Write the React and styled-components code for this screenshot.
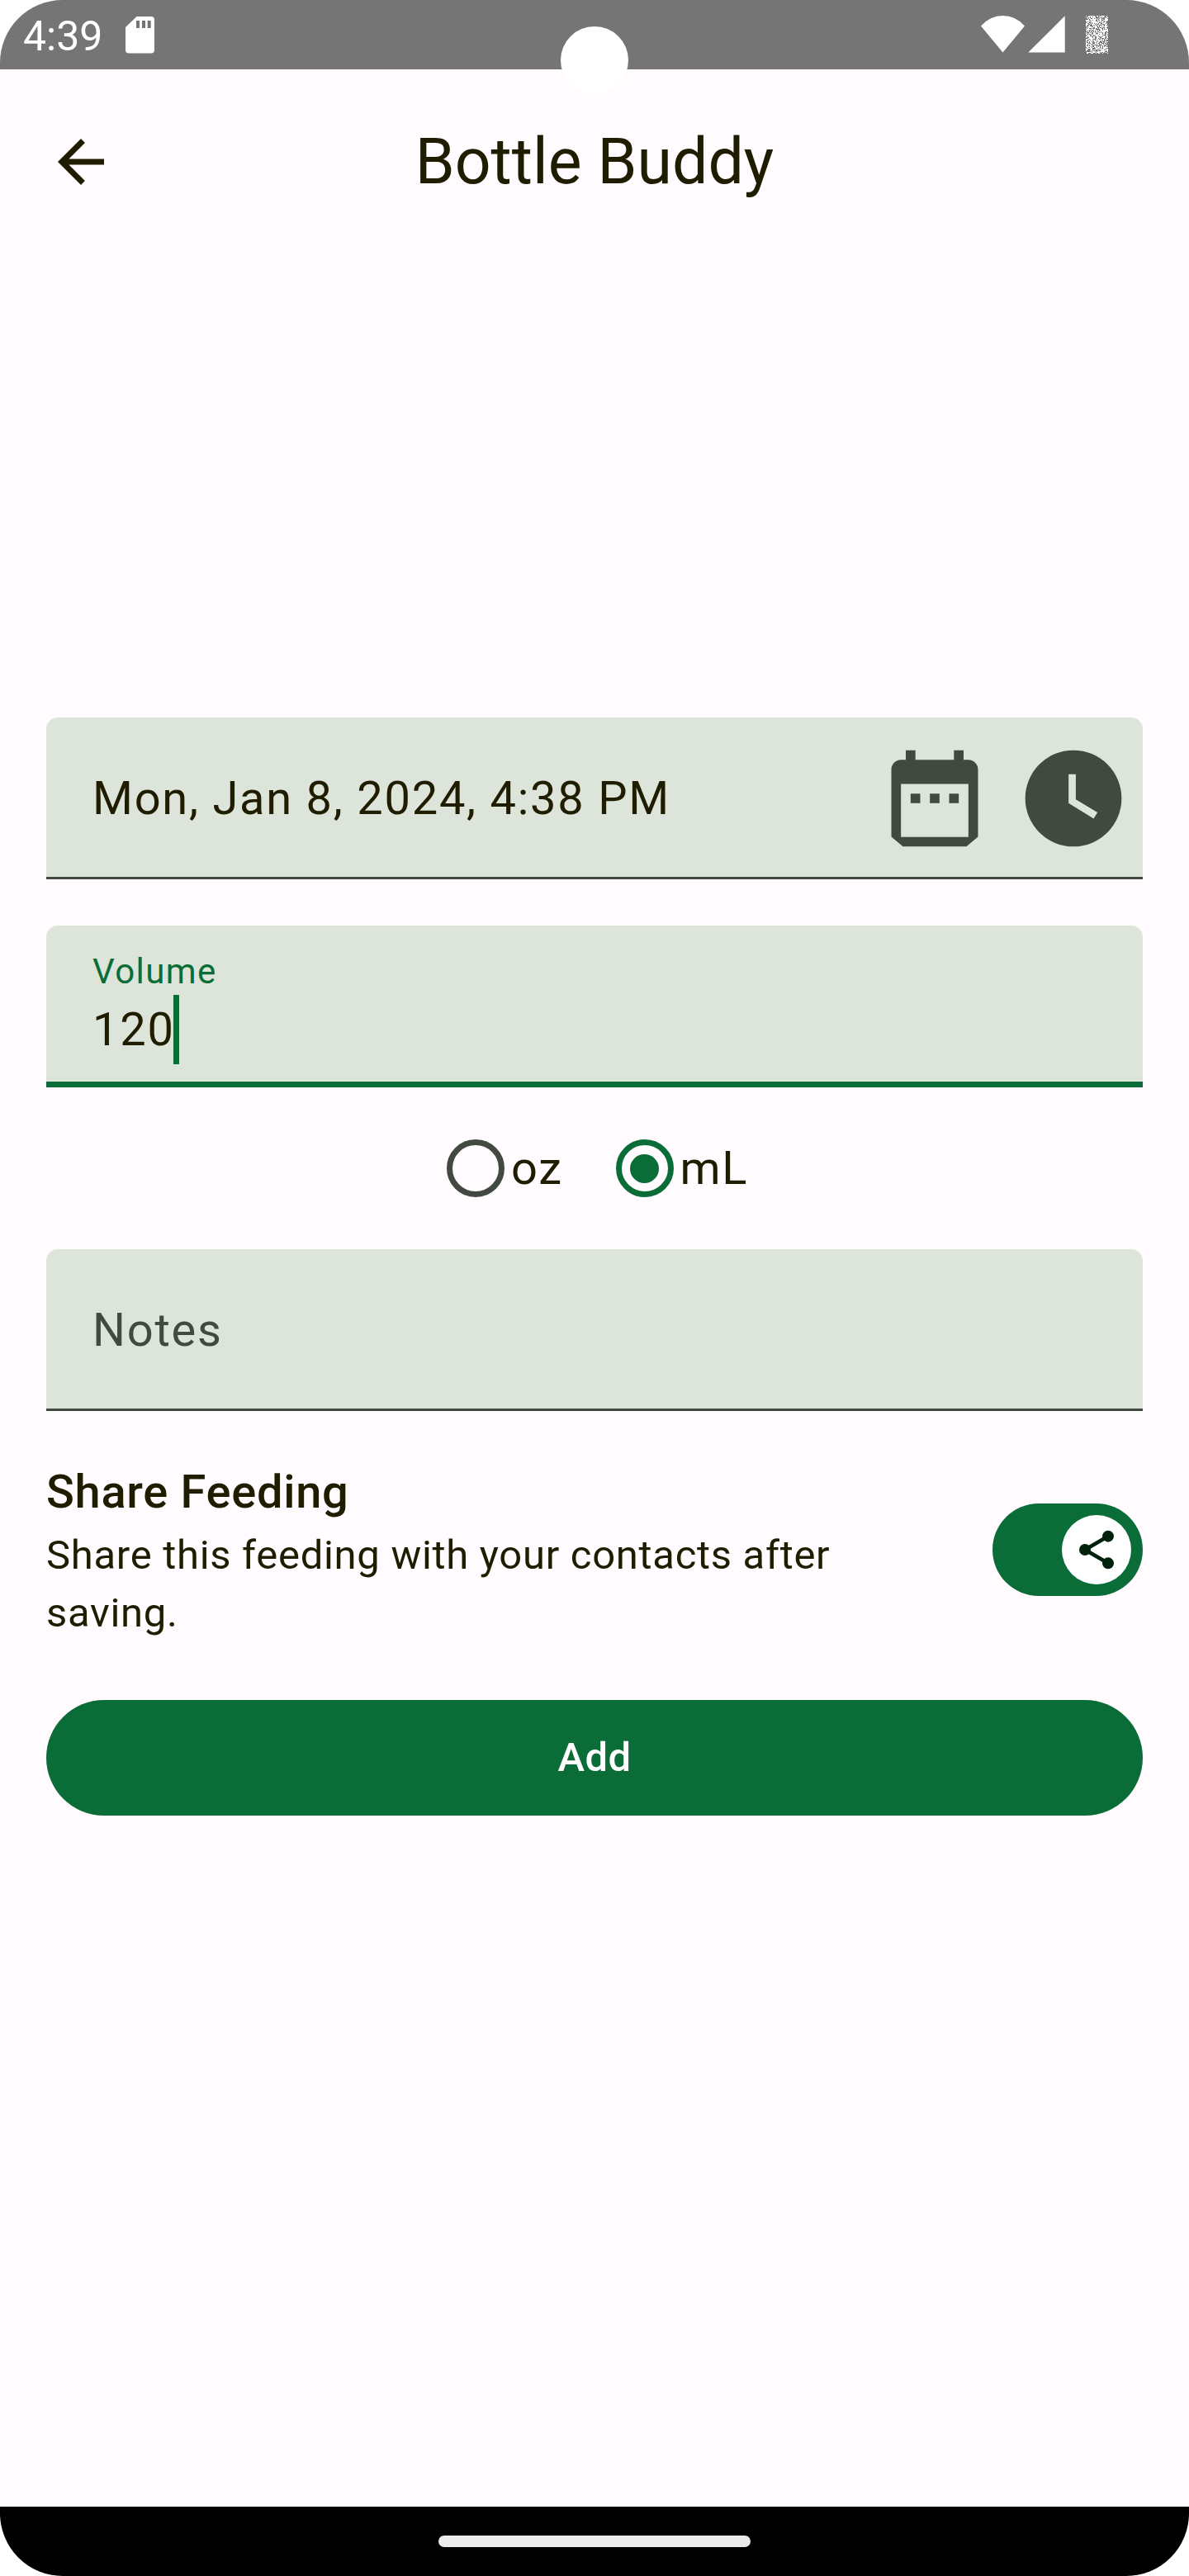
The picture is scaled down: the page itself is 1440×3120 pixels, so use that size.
import React from "react";
import styled, { createGlobalStyle } from "styled-components";

const color = {
  background: "#fffbff",
  field: "#dde5db",
  primary: "#0a6d37",
  ink: "#1f1c00",
  muted: "#414941",
  status: "#757575",
  onThumb: "#00210c",
};

const GlobalStyle = createGlobalStyle`
  * { box-sizing: border-box; }
  html, body { margin: 0; background: #ffffff; }
  body { font-family: Roboto, "Liberation Sans", sans-serif; }
`;

const Screen = styled.div`
  position: relative;
  width: 1440px;
  height: 3120px;
  display: flex;
  flex-direction: column;
  overflow: hidden;
  border-radius: 76px;
  background: ${color.background};
  color: ${color.ink};
`;

const StatusBar = styled.header`
  flex: none;
  height: 84px;
  padding: 0 98px 0 28px;
  display: flex;
  justify-content: space-between;
  background: ${color.status};
  color: #ffffff;
`;

const StatusGroup = styled.div`
  display: flex;
  align-items: flex-start;
`;

const Clock = styled.span`
  width: 124px;
  font-size: 50px;
  line-height: 88px;
`;

const StatusIcon = styled.svg`
  display: block;
  flex: none;
  margin: ${(p) => p.$margin || "0"};
`;

const Camera = styled.div`
  position: absolute;
  left: 679px;
  top: 32px;
  width: 82px;
  height: 82px;
  border-radius: 50%;
  background: #ffffff;
`;

const AppBar = styled.div`
  flex: none;
  height: 224px;
  padding: 0 56px;
  display: grid;
  grid-template-columns: 84px 1fr 84px;
  align-items: center;
`;

const PlainButton = styled.button`
  display: block;
  flex: none;
  padding: 0;
  border: 0;
  background: none;
  color: inherit;
  svg { display: block; fill: currentColor; }
`;

const Title = styled.h1`
  margin: 0;
  text-align: center;
  font-size: 77px;
  font-weight: 400;
  line-height: 98px;
`;

const Form = styled.main`
  flex: 1;
  display: flex;
  flex-direction: column;
  padding: 561px 56px 0;
`;

const Field = styled.div`
  height: 196px;
  padding: 0 14px 0 56px;
  display: flex;
  align-items: center;
  gap: 28px;
  margin-bottom: ${(p) => p.$gap || 0}px;
  border-radius: 14px 14px 0 0;
  background: linear-gradient(
    to top,
    ${(p) => (p.$focused ? color.primary : color.muted)} ${(p) => (p.$focused ? "7px" : "3.5px")},
    ${color.field} ${(p) => (p.$focused ? "7px" : "3.5px")}
  );
  color: ${color.muted};
`;

const FieldText = styled.span`
  flex: ${(p) => (p.$fit ? "none" : 1)};
  color: ${(p) => (p.$placeholder ? color.muted : color.ink)};
  font-size: 56px;
  line-height: 84px;
  letter-spacing: 1.75px;
`;

const FieldStack = styled.div`
  display: flex;
  flex-direction: column;
`;

const FieldLabel = styled.label`
  color: ${color.primary};
  font-size: 42px;
  line-height: 56px;
  letter-spacing: 1.4px;
`;

const ValueLine = styled.div`
  display: flex;
  height: 84px;
`;

const Caret = styled.i`
  width: 7px;
  height: 84px;
  margin-left: -1.5px;
  background: ${color.primary};
`;

const RadioRow = styled.div`
  height: 196px;
  display: flex;
  align-items: center;
  justify-content: center;
  gap: 64px;
  padding-left: 7.5px;
`;

const RadioOption = styled.label`
  display: flex;
  align-items: center;
  gap: 7.75px;
  font-size: 56px;
  line-height: 84px;
  letter-spacing: 1.75px;
`;

const RadioMark = styled.span`
  width: 70px;
  height: 70px;
  display: grid;
  place-items: center;
  border: 7px solid ${(p) => (p.$checked ? color.primary : color.muted)};
  border-radius: 50%;
  &::after {
    content: "";
    width: 35px;
    height: 35px;
    border-radius: 50%;
    background: ${(p) => (p.$checked ? color.primary : "transparent")};
  }
`;

const ShareRow = styled.section`
  display: flex;
  align-items: center;
  justify-content: space-between;
  margin-bottom: 70px;
`;

const ShareCopy = styled.div`
  width: 1090px;
`;

const ShareTitle = styled.h2`
  margin: 0;
  font-size: 56px;
  font-weight: 500;
  line-height: 84px;
  letter-spacing: 0.7px;
`;

const ShareText = styled.p`
  margin: 0;
  font-size: 49px;
  line-height: 70px;
  letter-spacing: 0.7px;
`;

const Switch = styled.div`
  width: 182px;
  height: 112px;
  padding: 14px;
  display: flex;
  justify-content: flex-end;
  border-radius: 56px;
  background: ${color.primary};
`;

const Thumb = styled.div`
  width: 84px;
  height: 84px;
  display: grid;
  place-items: center;
  border-radius: 50%;
  background: #ffffff;
`;

const AddButton = styled.button`
  height: 140px;
  padding: 0;
  border: 0;
  border-radius: 70px;
  background: ${color.primary};
  color: #ffffff;
  font: 500 49px/70px Roboto, "Liberation Sans", sans-serif;
  letter-spacing: 0.35px;
`;

const NavBar = styled.footer`
  flex: none;
  height: 84px;
  display: grid;
  place-items: center;
  background: #000000;
`;

const NavPill = styled.div`
  width: 378px;
  height: 14px;
  border-radius: 7px;
  background: #ebebeb;
`;

// Speckled battery fill: one-pixel runs from a fixed-seed generator.
const batterySpeckle = (() => {
  let seed = 1234567;
  let d = "";
  for (let y = 0; y < 46; y += 1) {
    for (let x = 0; x < 27; x += 1) {
      seed = (Math.imul(seed, 1664525) + 1013904223) >>> 0;
      if (seed / 4294967296 < 0.4) d += `M${x} ${y}h1v1h-1z`;
    }
  }
  return d;
})();

export default function App() {
  return (
    <>
      <GlobalStyle />
      <Screen>
        <StatusBar>
          <StatusGroup>
            <Clock>4:39</Clock>
            <StatusIcon $margin="20px 0 0" width="35" height="45" viewBox="0 0 35 45" fill="#fff">
              <path
                fillRule="evenodd"
                d="M13.5 0H31q4 0 4 4v36.500q0 4-4 4H4q-4 0-4-4V13zM13 5v9h4V5zm7 0v9h4V5zm6.700 0v9h4V5z"
              />
            </StatusIcon>
          </StatusGroup>
          <StatusGroup>
            <StatusIcon $margin="19px 4px 0 0" width="53" height="45" viewBox="0 0 53 45" fill="#fff">
              <path d="M0 12.500Q11 0 26.500 0T53 12.500L26.500 44.500z" />
            </StatusIcon>
            <StatusIcon $margin="19px 25px 0 0" width="45" height="45" viewBox="0 0 45 45" fill="#fff">
              <path d="M0.300 44.600L44.700 0.300V44.600z" />
            </StatusIcon>
            <StatusIcon $margin="19px 0 0" width="27" height="46" viewBox="0 0 27 46" shapeRendering="crispEdges">
              <path fill="#fff" d="M0 0h27v46H0z" />
              <path fill="#757575" d={batterySpeckle} />
            </StatusIcon>
          </StatusGroup>
        </StatusBar>

        <AppBar>
          <PlainButton aria-label="Back">
            <svg width="84" height="84" viewBox="0 0 24 24">
              <path d="M20 11H7.830l5.590-5.590L12 4l-8 8 8 8 1.410-1.410L7.830 13H20v-2z" />
            </svg>
          </PlainButton>
          <Title>Bottle Buddy</Title>
        </AppBar>

        <Form>
          <Field $gap={56}>
            <FieldText>Mon, Jan 8, 2024, 4:38 PM</FieldText>
            <PlainButton aria-label="Pick date">
              <svg width="140" height="140" viewBox="0 0 24 24">
                <path
                  fillRule="evenodd"
                  d="M19 4h-1V2h-2v2H8V2H6v2H5c-1.110 0-2 .9-2 2v13.950L5.400 22h13.200L21 19.950V6c0-1.100-.9-2-2-2zm0 16H5V9h14v11zM7 11h2v2H7zm4 0h2v2h-2zm4 0h2v2h-2z"
                />
              </svg>
            </PlainButton>
            <PlainButton aria-label="Pick time">
              <svg width="140" height="140" viewBox="0 0 24 24">
                <path
                  fillRule="evenodd"
                  d="M12 2a10 10 0 1 0 0 20a10 10 0 1 0 0-20zM16.200 16.200L11 13V7h1.500v5.200l4.500 2.700z"
                />
              </svg>
            </PlainButton>
          </Field>

          <Field $focused>
            <FieldStack>
              <FieldLabel>Volume</FieldLabel>
              <ValueLine>
                <FieldText $fit>120</FieldText>
                <Caret />
              </ValueLine>
            </FieldStack>
          </Field>

          <RadioRow>
            <RadioOption>
              <RadioMark />
              oz
            </RadioOption>
            <RadioOption>
              <RadioMark $checked />
              mL
            </RadioOption>
          </RadioRow>

          <Field $gap={56}>
            <FieldText $placeholder>Notes</FieldText>
          </Field>

          <ShareRow>
            <ShareCopy>
              <ShareTitle>Share Feeding</ShareTitle>
              <ShareText>Share this feeding with your contacts after saving.</ShareText>
            </ShareCopy>
            <Switch role="switch" aria-checked="true">
              <Thumb>
                <svg width="56" height="56" viewBox="0 0 24 24" fill={color.onThumb}>
                  <path d="M18 5L6 12l12 7" fill="none" stroke={color.onThumb} strokeWidth="2" />
                  <circle cx="18" cy="5" r="3" />
                  <circle cx="6" cy="12" r="3" />
                  <circle cx="18" cy="19" r="3" />
                </svg>
              </Thumb>
            </Switch>
          </ShareRow>

          <AddButton>Add</AddButton>
        </Form>

        <NavBar>
          <NavPill />
        </NavBar>
        <Camera />
      </Screen>
    </>
  );
}
